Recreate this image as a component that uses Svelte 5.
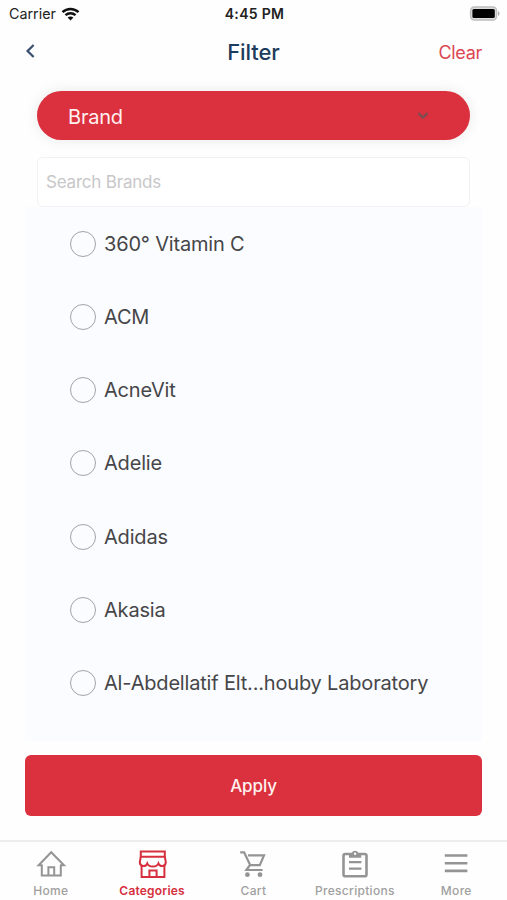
<script>
	const brands = [
		"360° Vitamin C",
		"ACM",
		"AcneVit",
		"Adelie",
		"Adidas",
		"Akasia",
		"Al-Abdellatif Elt...houby Laboratory",
	];

	const tabs = ["Home", "Categories", "Cart", "Prescriptions", "More"];

	let active = "Categories";
	let selected = null;
	let query = "";

	$: visible = brands.filter((b) => b.toLowerCase().includes(query.toLowerCase()));

	const clear = () => {
		selected = null;
		query = "";
	};
</script>

<div class="screen">
	<div class="status">
		<div class="carrier">
			<span>Carrier</span>
			<svg width="19" height="14" viewBox="0 0 18 14" fill="none" stroke="#111" stroke-width="2.5">
				<path d="M1 5.1C5.5.8 12.5.8 17 5.1" />
				<path d="M4 8.2c2.8-2.7 7.2-2.7 10 0" />
				<path d="M9 13.5 6.1 10.6c1.6-1.5 4.2-1.5 5.8 0z" fill="#111" stroke="none" />
			</svg>
		</div>
		<span class="time">4:45 PM</span>
		<svg class="battery" width="31" height="15" viewBox="0 0 31 15">
			<rect x="1.6" y="1" width="26" height="13" rx="3.8" fill="#ddd" stroke="#bdbdbd" stroke-width="1.4" />
			<rect x="3.4" y="3" width="22.4" height="9" rx="1.5" fill="#000" />
			<path d="M29 5.2c2 .7 2 3.9 0 4.6z" fill="#aaa" />
		</svg>
	</div>

	<header>
		<button class="back" aria-label="Back">
			<svg width="10" height="16" viewBox="0 0 10 16" fill="none" stroke="#3b5070" stroke-width="2.3">
				<path d="M8.6 2 2.6 8l6 6" />
			</svg>
		</button>
		<h1>Filter</h1>
		<button class="clear" on:click={clear}>Clear</button>
	</header>

	<main>
		<button class="brand">
			<span>Brand</span>
			<svg width="12" height="9" viewBox="0 0 12 9" fill="none" stroke="#7c4d51" stroke-width="2.5">
				<path d="M1.4 2.2 6 6.6l4.6-4.4" />
			</svg>
		</button>
		<input class="search" placeholder="Search Brands" bind:value={query} />
		<ul>
			{#each visible as brand}
				<li>
					<button class="option" on:click={() => (selected = brand)}>
						<span class="radio" class:checked={selected === brand}></span>
						<span>{brand}</span>
					</button>
				</li>
			{/each}
		</ul>
		<button class="apply">Apply</button>
	</main>

	<nav>
		{#each tabs as tab}
			<button class="tab" class:active={active === tab} on:click={() => (active = tab)}>
				<svg width="32" height="32" viewBox="0 0 32 32" fill="none" stroke="currentColor" stroke-width="2">
					{#if tab === "Home"}
						<path d="M6.8 17.2V27.6h19V17.2M13.4 27.6v-8.4h5.8v8.4" />
						<path d="M7.6 17.2H3.6L16.2 4.2 29 17.2h-4" />
					{:else if tab === "Categories"}
						<path d="M4.8 3.6h24v5.2h-24zM5.6 17.5v11.6h22.8V17.5M13.4 29.1v-6.5h7.2v6.5" />
						<path d="M4.8 8.8 3.8 14c0 4.8 6 5.2 7.5 1.5 1.5 4 9.6 4 11.1 0 1.6 3.7 7.4 3.3 7.4-1.5l-1-5.2" />
					{:else if tab === "Cart"}
						<path d="M3.2 4.4h3.9l6.2 12.8h9.5L27 7.4H11M13 17l-3.6 5h16.2" stroke-width="2.2" />
						<circle cx="10.4" cy="26.7" r="2.4" fill="currentColor" stroke="none" />
						<circle cx="23" cy="26.7" r="2.4" fill="currentColor" stroke="none" />
					{:else if tab === "Prescriptions"}
						<rect x="4.5" y="6" width="23" height="22.2" rx="1.8" stroke-width="2.6" />
						<path d="M10 14.2h12.4M10 20.7h12.4" stroke-width="2.3" />
						<path d="M10 9.8V5h2.8a3.6 3.6 0 0 1 6.6 0h2.8v4.8z" fill="currentColor" stroke="none" />
						<circle cx="16.1" cy="5.8" r="1.2" fill="#fff" stroke="none" />
					{:else}
						<path d="M4.8 7.5h22.6M4.8 15.2h22.6M4.8 22.9h22.6" stroke-width="2.6" />
					{/if}
				</svg>
				<span class="tab-label">{tab}</span>
			</button>
		{/each}
	</nav>
</div>

<style>
	:global(body) {
		background: #fff;
	}

	.screen {
		display: flex;
		flex-direction: column;
		width: 507px;
		height: 900px;
		background: #fefefe;
		font-family: Inter, "Liberation Sans", sans-serif;
		box-sizing: border-box;
		overflow: hidden;
	}

	button {
		padding: 0;
		border: 0;
		background: none;
		font: inherit;
		color: inherit;
		cursor: pointer;
	}

	svg {
		display: block;
		flex: none;
	}

	.status {
		display: grid;
		grid-template-columns: 1fr auto 1fr;
		align-items: center;
		height: 27px;
		padding: 0 7px 0 9px;
		box-sizing: border-box;
		font-size: 14.3px;
		color: #222;
	}

	.carrier {
		display: flex;
		align-items: center;
		gap: 5px;
	}

	.time {
		font-size: 14px;
		font-weight: 600;
		letter-spacing: 0.3px;
	}

	.battery {
		justify-self: end;
	}

	header {
		display: grid;
		grid-template-columns: 1fr auto 1fr;
		align-items: center;
		height: 50px;
		padding: 0 25px;
	}

	.back {
		justify-self: start;
		margin-top: -3px;
	}

	h1 {
		margin: 0;
		font-size: 22px;
		font-weight: 500;
		line-height: 50px;
		letter-spacing: -0.1px;
		color: #1d3b5c;
	}

	.clear {
		justify-self: end;
		padding-top: 1px;
		font-size: 18px;
		letter-spacing: -0.3px;
		color: #dc4654;
	}

	main {
		display: flex;
		flex-direction: column;
		padding: 14px 25px 0;
		height: 763px;
		box-sizing: border-box;
	}

	.brand {
		display: flex;
		align-items: center;
		justify-content: space-between;
		height: 49px;
		margin: 0 12px;
		padding: 0 41px 0 31px;
		border-radius: 25px;
		background: #db303d;
		box-shadow: 0 0 14px rgba(0, 0, 0, 0.09);
		font-size: 20px;
		letter-spacing: -0.2px;
		color: #fff0f0;
	}

	.brand span {
		padding-top: 2px;
	}

	.search {
		height: 50px;
		margin: 17px 12px 0;
		padding: 0 8px;
		border: 1.5px solid #f1f1f3;
		border-radius: 6px;
		background: #fff;
		box-sizing: border-box;
		font: inherit;
		font-size: 17px;
		letter-spacing: -0.2px;
		outline: none;
	}

	.search::placeholder {
		color: #c7c7c9;
		opacity: 1;
	}

	ul {
		height: 534px;
		margin: 0;
		padding: 0 45px;
		background: #fafcff;
		box-sizing: border-box;
		list-style: none;
	}

	li {
		height: 73.3px;
	}

	.option {
		display: flex;
		align-items: center;
		gap: 8px;
		height: 73px;
		font-size: 20px;
		letter-spacing: -0.18px;
		color: #464648;
		white-space: nowrap;
	}

	.radio {
		width: 26px;
		height: 26px;
		border: 1.5px solid #a3a3a5;
		border-radius: 50%;
		box-sizing: border-box;
	}

	.radio.checked {
		border: 7px solid #db303d;
	}

	.apply {
		flex: none;
		height: 61px;
		margin-top: 14px;
		border-radius: 6px;
		background: #db303d;
		font-size: 17px;
		font-weight: 500;
		letter-spacing: -0.1px;
		color: #fff0f0;
	}

	nav {
		display: grid;
		grid-template-columns: repeat(5, minmax(0, 1fr));
		height: 60px;
		border-top: 2px solid #ededed;
		box-sizing: border-box;
	}

	.tab {
		display: flex;
		flex-direction: column;
		align-items: center;
		padding-top: 6px;
		color: #949494;
	}

	.tab-label {
		margin-top: 3px;
		font-size: 12px;
		font-weight: 500;
		line-height: 16px;
		letter-spacing: 0.3px;
		color: #a0a0a0;
	}

	.tab.active,
	.active .tab-label {
		color: #d6303e;
	}

	.active .tab-label {
		font-weight: 600;
		letter-spacing: 0.2px;
	}
</style>
